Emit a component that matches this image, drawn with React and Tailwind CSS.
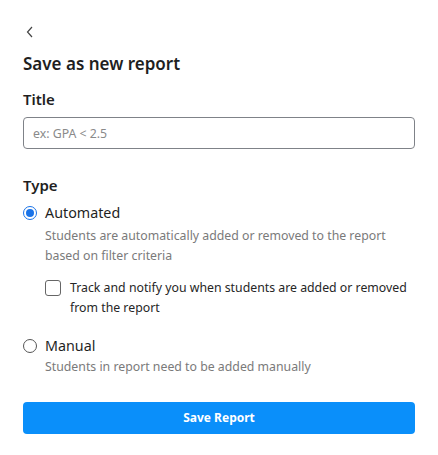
import { useState } from 'react';

export default function App() {
  const [type, setType] = useState('automated');
  const [track, setTrack] = useState(false);

  return (
    <div className="w-[438px] h-[455px] bg-white px-[23px] pt-[24px] text-[#1f1f1f]" style={{ fontFamily: '"Noto Sans", "Open Sans", sans-serif' }}>
      {/* ── Back ── */}
      <button className="flex h-[16px] w-[16px] items-center justify-start pl-[2px] text-[#444]" aria-label="Back">
        <svg width="10" height="12" viewBox="0 0 10 12" fill="none" stroke="currentColor" strokeWidth="1.2">
          <path d="M7 1L2.5 6L7 11" />
        </svg>
      </button>

      <h1 className="mt-[12px] text-[17px] font-semibold leading-[24px]">Save as new report</h1>

      {/* ── Title ── */}
      <label className="mt-[13px] block text-[15px] font-semibold leading-[20px]">Title</label>
      <input
        type="text"
        placeholder="ex: GPA < 2.5"
        className="mt-[8px] block h-[32px] w-full rounded-[4px] border border-[#7f8288] px-[9px] text-[12.3px] placeholder-[#8a8a8a] outline-none"
      />

      {/* ── Type ── */}
      <div className="mt-[26px] text-[15px] font-semibold leading-[20px]">Type</div>

      <div className="mt-[8px]">
        <label className="flex cursor-pointer items-center gap-[8px]" onClick={() => setType('automated')}>
          <span className={`flex h-[14px] w-[14px] items-center justify-center rounded-full border ${type === 'automated' ? 'border-[#1a73e8]' : 'border-[#555]'}`}>
            {type === 'automated' && <span className="h-[8px] w-[8px] rounded-full bg-[#1a73e8]" />}
          </span>
          <span className="text-[14.3px] leading-[20px]">Automated</span>
        </label>
        <p className="ml-[22px] mt-[3px] text-[12.3px] leading-[20px] text-[#7a7a7a]">
          Students are automatically added or removed to the report based on filter criteria
        </p>

        <label className="ml-[22px] mt-[12px] flex cursor-pointer items-start gap-[9px]" onClick={() => setTrack(!track)}>
          <span className={`mt-[2px] h-[16px] w-[16px] shrink-0 rounded-[3px] border border-[#666] ${track ? 'bg-[#1a73e8]' : 'bg-white'}`} />
          <span className="text-[12.3px] leading-[20px] text-[#262626]">
            Track and notify you when students are added or removed from the report
          </span>
        </label>
      </div>

      <div className="mt-[18px]">
        <label className="flex cursor-pointer items-center gap-[8px]" onClick={() => setType('manual')}>
          <span className={`flex h-[14px] w-[14px] items-center justify-center rounded-full border ${type === 'manual' ? 'border-[#1a73e8]' : 'border-[#555]'}`}>
            {type === 'manual' && <span className="h-[8px] w-[8px] rounded-full bg-[#1a73e8]" />}
          </span>
          <span className="text-[14.3px] leading-[20px]">Manual</span>
        </label>
        <p className="ml-[22px] mt-[1px] text-[12.3px] leading-[20px] text-[#7a7a7a]">
          Students in report need to be added manually
        </p>
      </div>

      <button className="mt-[25px] h-[32px] w-full rounded-[4px] bg-[#0a8ffa] text-[12px] font-bold text-white">
        Save Report
      </button>
    </div>
  );
}
